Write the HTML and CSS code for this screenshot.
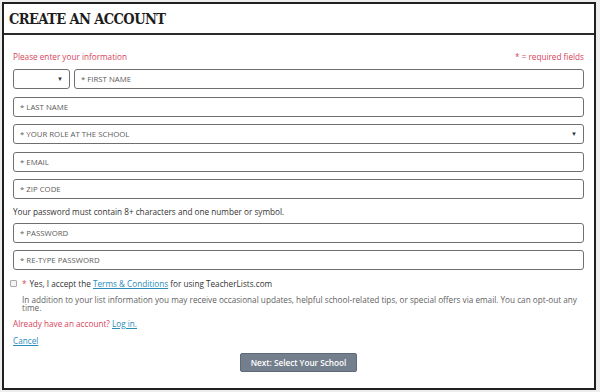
FILE: index.html
```html
<!DOCTYPE html>
<html lang="en">
<head>
    <meta charset="UTF-8">
    <title>Create an Account</title>
    <link rel="stylesheet" href="styles.css">
</head>
<body>
    <div class="account-box">
        <div class="account-header">
            <h1>CREATE AN ACCOUNT</h1>
        </div>

        <form class="account-form">
            <div class="form-note">
                <span>Please enter your information</span>
                <span>* = required fields</span>
            </div>

            <div class="name-row">
                <div class="field select-field title-select"><span></span><span class="arrow">&#9660;</span></div>
                <div class="field grow">* FIRST NAME</div>
            </div>
            <div class="field">* LAST NAME</div>
            <div class="field select-field"><span>* YOUR ROLE AT THE SCHOOL</span><span class="arrow">&#9660;</span></div>
            <div class="field">* EMAIL</div>
            <div class="field">* ZIP CODE</div>

            <p class="hint">Your password must contain 8+ characters and one number or symbol.</p>

            <div class="field">* PASSWORD</div>
            <div class="field">* RE-TYPE PASSWORD</div>

            <label class="terms">
                <span class="box"></span>
                <span class="req">*</span>
                <span>Yes, I accept the <a href="#">Terms &amp; Conditions</a> for using TeacherLists.com</span>
            </label>
            <p class="fine-print">In addition to your list information you may receive occasional updates, helpful school-related tips, or special offers via email. You can opt-out any time.</p>

            <p class="login">Already have an account? <a href="#">Log in.</a></p>
            <p class="cancel"><a href="#">Cancel</a></p>

            <div class="actions">
                <button type="button" class="next-button">Next: Select Your School</button>
            </div>
        </form>
    </div>
</body>
</html>
```

FILE: styles.css
```css
* {
    margin: 0;
    padding: 0;
    box-sizing: border-box;
}

body {
    font-family: 'Open Sans', 'Noto Sans', sans-serif;
    background: #ededed;
    padding: 2px 4px 2px 2px;
    color: #333;
}

.account-box {
    border: 2px solid #1f1f1f;
    background: #ffffff;
    height: 388px;
}

.account-header {
    height: 31px;
    border-bottom: 2px solid #2b2b2b;
    display: flex;
    align-items: center;
    padding-left: 5px;
}

.account-header h1 {
    font-family: 'DejaVu Serif', 'Liberation Serif', serif;
    font-stretch: condensed;
    font-size: 14.5px;
    font-weight: 700;
    letter-spacing: -0.6px;
    color: #1d1d1d;
}

.account-form {
    padding: 16px 10px 0 9px;
    font-size: 8.2px;
}

.form-note {
    display: flex;
    justify-content: space-between;
    color: #d6435a;
    line-height: 12px;
    margin-bottom: 6px;
}

.name-row {
    display: flex;
    gap: 4px;
}

.grow {
    flex: 1;
}

.field {
    height: 20px;
    border: 1px solid #6f6f6f;
    border-radius: 3px;
    margin-bottom: 7.5px;
    padding: 0 6px;
    display: flex;
    align-items: center;
    color: #5a5a5a;
    font-size: 7.8px;
}

.select-field {
    justify-content: space-between;
}

.title-select {
    width: 57px;
}

.arrow {
    font-size: 6px;
    color: #333;
}

.hint {
    line-height: 12px;
    margin: -1px 0 5px;
    color: #333;
}

.terms {
    display: flex;
    align-items: center;
    line-height: 12px;
    margin: 0 0 6px -3px;
    color: #333;
}

.box {
    width: 7px;
    height: 7px;
    border: 1px solid #aaa;
    border-radius: 1px;
    background: #f4f4f4;
    margin-right: 5px;
}

.req {
    color: #d6435a;
    margin-right: 3px;
}

a {
    color: #2a8ab8;
}

.fine-print {
    line-height: 8.5px;
    padding-left: 9px;
    color: #5f5f5f;
    margin-bottom: 5px;
}

.login {
    color: #d6435a;
    line-height: 12px;
    margin-bottom: 5px;
}

.cancel {
    line-height: 12px;
    margin-bottom: 6px;
}

.actions {
    display: flex;
    justify-content: center;
}

.next-button {
    background: #737f8c;
    color: #ffffff;
    border: 1px solid #5e6a77;
    border-radius: 2px;
    width: 117px;
    height: 19px;
    font-family: inherit;
    font-size: 8.2px;
    font-weight: 600;
}
```
